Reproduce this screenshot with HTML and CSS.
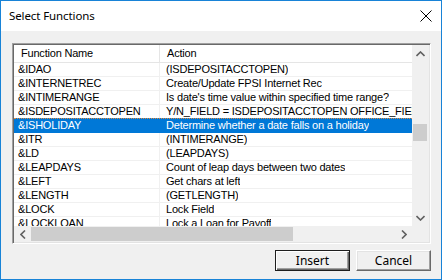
FILE: index.html
```html
<!DOCTYPE html>
<html>
<head>
<meta charset="utf-8">
<link rel="stylesheet" href="styles.css">
</head>
<body>
<div class="window">
  <div class="titlebar">
    <span class="title">Select Functions</span>
    <svg class="close" width="12" height="12" viewBox="0 0 12 12"><path d="M0.5 0.5L11.5 11.5M11.5 0.5L0.5 11.5" stroke="#000" stroke-width="1" fill="none"/></svg>
  </div>
  <div class="body">
    <div class="list">
      <div class="view">
        <div class="header">
          <div class="hcell c1">Function Name</div>
          <div class="hcell c2">Action</div>
        </div>
        <div class="rows">
          <div class="row"><div class="cell c1">&amp;IDAO</div><div class="cell c2">(ISDEPOSITACCTOPEN)</div></div>
          <div class="row"><div class="cell c1">&amp;INTERNETREC</div><div class="cell c2">Create/Update FPSI Internet Rec</div></div>
          <div class="row"><div class="cell c1">&amp;INTIMERANGE</div><div class="cell c2">Is date's time value within specified time range?</div></div>
          <div class="row"><div class="cell c1">&amp;ISDEPOSITACCTOPEN</div><div class="cell c2">Y/N_FIELD = ISDEPOSITACCTOPEN OFFICE_FIELD ACCT_FIELD</div></div>
          <div class="row sel"><div class="cell c1">&amp;ISHOLIDAY</div><div class="cell c2">Determine whether a date falls on a holiday</div></div>
          <div class="row"><div class="cell c1">&amp;ITR</div><div class="cell c2">(INTIMERANGE)</div></div>
          <div class="row"><div class="cell c1">&amp;LD</div><div class="cell c2">(LEAPDAYS)</div></div>
          <div class="row"><div class="cell c1">&amp;LEAPDAYS</div><div class="cell c2">Count of leap days between two dates</div></div>
          <div class="row"><div class="cell c1">&amp;LEFT</div><div class="cell c2">Get chars at left</div></div>
          <div class="row"><div class="cell c1">&amp;LENGTH</div><div class="cell c2">(GETLENGTH)</div></div>
          <div class="row"><div class="cell c1">&amp;LOCK</div><div class="cell c2">Lock Field</div></div>
          <div class="row"><div class="cell c1">&amp;LOCKLOAN</div><div class="cell c2">Lock a Loan for Payoff</div></div>
        </div>
      </div>
      <div class="vscroll">
        <div class="arrow"><svg width="9" height="6" viewBox="0 0 9 6"><path d="M0.5 5L4.5 1L8.5 5" stroke="#606060" stroke-width="1.6" fill="none"/></svg></div>
        <div class="vtrack"><div class="vthumb"></div></div>
        <div class="arrow"><svg width="9" height="6" viewBox="0 0 9 6"><path d="M0.5 1L4.5 5L8.5 1" stroke="#606060" stroke-width="1.6" fill="none"/></svg></div>
      </div>
      <div class="hscroll">
        <div class="harrow"><svg width="6" height="9" viewBox="0 0 6 9"><path d="M5 0.5L1 4.5L5 8.5" stroke="#606060" stroke-width="1.6" fill="none"/></svg></div>
        <div class="htrack"><div class="hthumb"></div></div>
        <div class="harrow"><svg width="6" height="9" viewBox="0 0 6 9"><path d="M1 0.5L5 4.5L1 8.5" stroke="#606060" stroke-width="1.6" fill="none"/></svg></div>
      </div>
      <div class="corner"></div>
    </div>
    <div class="buttons">
      <button class="btn default">Insert</button>
      <button class="btn">Cancel</button>
    </div>
  </div>
</div>
</body>
</html>
```
FILE: styles.css
```css
html, body {
  margin: 0;
  padding: 0;
  background: #f0f0f0;
}
.window {
  width: 442px;
  height: 280px;
  box-sizing: border-box;
  border: 1px solid #1883d7;
  background: #f0f0f0;
  display: flex;
  flex-direction: column;
  overflow: hidden;
}
.titlebar {
  height: 30px;
  background: #ffffff;
  display: flex;
  align-items: center;
  justify-content: space-between;
  padding: 0 9px 0 8px;
  flex: none;
}
.title {
  font-family: "Noto Sans", "Open Sans", sans-serif;
  font-size: 11.5px;
  letter-spacing: -0.1px;
  color: #000;
  position: relative;
  top: -1px;
}
.close {
  display: block;
}
.body {
  flex: 1;
  padding: 12px 10px 0 11px;
  display: flex;
  flex-direction: column;
}
.list {
  height: 201px;
  box-sizing: border-box;
  border-top: 1px solid #a0a0a0;
  border-left: 1px solid #a0a0a0;
  border-right: 1px solid #ffffff;
  border-bottom: 1px solid #ffffff;
  box-shadow: inset 1px 1px 0 #696969, inset -1px -1px 0 #e3e3e3;
  padding: 1px;
  display: grid;
  grid-template-columns: 1fr 17px;
  grid-template-rows: 1fr 16px;
  background: #fff;
}
.view {
  background: #fff;
  overflow: hidden;
  font-family: "Liberation Sans", Arial, sans-serif;
  font-size: 11px;
  letter-spacing: -0.2px;
  color: #000;
}
.header {
  display: flex;
  height: 18px;
  border-bottom: 1px solid #e5e5e5;
  box-sizing: border-box;
}
.hcell {
  line-height: 17px;
  padding-left: 7px;
  white-space: nowrap;
}
.hcell.c1 {
  width: 146px;
  box-sizing: border-box;
  border-right: 1px solid #e5e5e5;
}
.rows {
  display: flex;
  flex-direction: column;
}
.row {
  display: flex;
  height: 14px;
  box-sizing: border-box;
  border-bottom: 1px solid #f0f0f0;
  white-space: nowrap;
}
.cell {
  line-height: 13px;
  padding-left: 4px;
  overflow: hidden;
}
.cell.c1 {
  width: 146px;
  flex: none;
  box-sizing: border-box;
  border-right: 1px solid #f0f0f0;
}
.cell.c2 {
  padding-left: 6px;
}
.row.sel {
  background: #0078d7;
  color: #fff;
  border-bottom-color: #0078d7;
  border-top: 1px dotted #e08a40;
  margin-top: -1px;
  height: 15px;
}
.row.sel .cell.c1 {
  border-right-color: #0078d7;
}
.vscroll {
  background: #f0f0f0;
  display: flex;
  flex-direction: column;
}
.arrow {
  height: 17px;
  display: flex;
  align-items: center;
  justify-content: center;
  flex: none;
}
.vtrack {
  flex: 1;
  padding: 62px 2px 0 1px;
}
.vthumb {
  height: 17px;
  background: #cdcdcd;
}
.hscroll {
  background: #f0f0f0;
  display: flex;
}
.harrow {
  width: 17px;
  display: flex;
  align-items: center;
  justify-content: center;
  flex: none;
}
.htrack {
  flex: 1;
  padding: 1px 0 1px 0;
}
.hthumb {
  width: 262px;
  height: 100%;
  background: #cdcdcd;
}
.corner {
  background: #f0f0f0;
}
.buttons {
  display: flex;
  justify-content: flex-end;
  gap: 6px;
  margin-top: 6px;
  padding-right: 0;
}
.btn {
  width: 75px;
  height: 21px;
  font-family: "Noto Sans", "Open Sans", sans-serif;
  font-size: 12px;
  color: #000;
  background: #f0f0f0;
  border-top: 1px solid #ffffff;
  border-left: 1px solid #ffffff;
  border-right: 1px solid #696969;
  border-bottom: 1px solid #696969;
  box-shadow: inset -1px -1px 0 #a0a0a0, inset 1px 1px 0 #e3e3e3;
  padding: 0;
  line-height: 18px;
}
.btn.default {
  border: 1px solid #1e1e1e;
  box-shadow: inset 1px 1px 0 #ffffff, inset -1px -1px 0 #696969, inset -2px -2px 0 #a0a0a0;
}
```
